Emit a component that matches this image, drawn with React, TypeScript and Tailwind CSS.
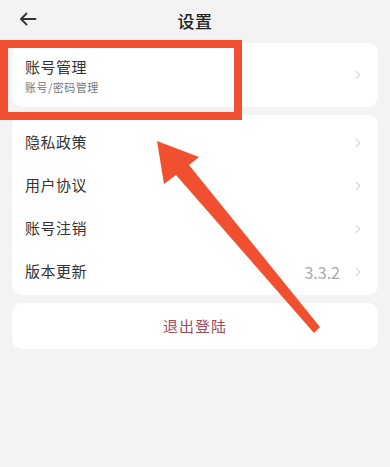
import { ChevronRight } from 'lucide-react'

const rows = [
  { label: '隐私政策' },
  { label: '用户协议' },
  { label: '账号注销' },
  { label: '版本更新', value: '3.3.2' },
]

function Chevron() {
  return <ChevronRight className="h-[14px] w-[14px] text-[#b5b5b5]" strokeWidth={1.5} />
}

export default function App() {
  return (
    <div
      className="relative h-[467px] w-[390px] overflow-hidden bg-[#f3f3f3] text-[#333]"
      style={{ fontFamily: '"Noto Sans CJK SC", "Noto Sans", sans-serif' }}
    >
      {/* header */}
      <div className="relative flex h-[40px] items-center justify-center">
        <svg
          className="absolute left-[19px] top-[12px]"
          width="18"
          height="14"
          viewBox="0 0 18 14"
          fill="none"
          stroke="#333"
          strokeWidth="1.8"
          strokeLinecap="round"
          strokeLinejoin="round"
        >
          <path d="M16.5 7H2M7.5 1.5L2 7l5.5 5.5" />
        </svg>
        <span className="text-[17px] font-medium leading-none tracking-[0.5px] text-[#222]">设置</span>
      </div>

      <div className="flex flex-col gap-[8px] px-[12px] pt-[3px]">
        {/* account card */}
        <div className="flex h-[64px] items-center justify-between rounded-[10px] bg-white pl-[13px] pr-[13px]">
          <div className="flex flex-col">
            <span className="text-[15px] leading-[20px] tracking-[0.5px] text-[#333]">账号管理</span>
            <span className="mt-[3px] text-[11px] leading-[14px] tracking-[0.5px] text-[#777]">账号/密码管理</span>
          </div>
          <Chevron />
        </div>

        {/* list card */}
        <div className="flex flex-col rounded-[10px] bg-white pb-[2px] pt-[6px]">
          {rows.map((r) => (
            <div key={r.label} className="flex h-[43px] items-center justify-between pl-[13px] pr-[13px]">
              <span className="text-[15px] tracking-[0.5px] text-[#333]">{r.label}</span>
              <div className="flex items-center gap-[11px]">
                {r.value && <span className="text-[16px] text-[#aaa]">{r.value}</span>}
                <Chevron />
              </div>
            </div>
          ))}
        </div>

        {/* logout */}
        <div className="flex h-[46px] items-center justify-center rounded-[10px] bg-white">
          <span className="text-[15px] tracking-[1px] text-[#a04a5a]">退出登陆</span>
        </div>
      </div>

      {/* annotation overlay */}
      <div className="pointer-events-none absolute left-[0px] top-[40px] h-[80px] w-[242px] border-[8px] border-[#f0502f]" />
      <svg className="pointer-events-none absolute left-0 top-0" width="390" height="467">
        <polygon
          points="157,141 199,157 189,165 320,327 314,333 176,175 164,184"
          fill="#f0502f"
        />
      </svg>
    </div>
  )
}
